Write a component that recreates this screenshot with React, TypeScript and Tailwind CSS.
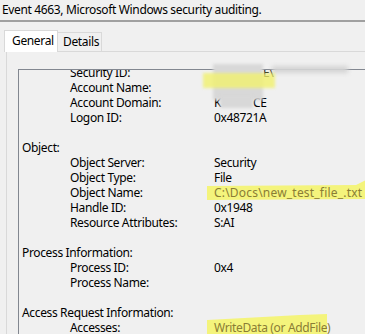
import React from "react";

type Row = { kind: "h" | "l" | "b"; label?: string; value?: React.ReactNode; hl?: boolean; wide?: boolean };

const rows: Row[] = [
  { kind: "l", label: "Security ID:", value: <span className="pl-[49px]">E\</span> },
  { kind: "l", label: "Account Name:", value: "" },
  {
    kind: "l",
    label: "Account Domain:",
    value: (
      <span className="flex">
        <span>K</span>
        <span className="inline-block w-[32px]" />
        <span>CE</span>
      </span>
    ),
  },
  { kind: "l", label: "Logon ID:", value: "0x48721A" },
  { kind: "b" },
  { kind: "h", label: "Object:" },
  { kind: "l", label: "Object Server:", value: "Security" },
  { kind: "l", label: "Object Type:", value: "File" },
  { kind: "l", label: "Object Name:", value: "C:\\Docs\\new_test_file_.txt", hl: true, wide: true },
  { kind: "l", label: "Handle ID:", value: "0x1948" },
  { kind: "l", label: "Resource Attributes:", value: "S:AI" },
  { kind: "b" },
  { kind: "h", label: "Process Information:" },
  { kind: "l", label: "Process ID:", value: "0x4" },
  { kind: "l", label: "Process Name:", value: "" },
  { kind: "b" },
  { kind: "h", label: "Access Request Information:" },
  { kind: "l", label: "Accesses:", value: "WriteData (or AddFile)", hl: true },
];

export default function App() {
  return (
    <div
      className="relative z-0 w-[365px] h-[334px] overflow-hidden bg-[#f0f0f0] text-[12px] tracking-[-0.35px] text-black"
      style={{ fontFamily: '"Noto Sans", "Open Sans", sans-serif' }}
    >
      {/* highlighter strokes (under text) */}
      <svg className="absolute left-0 top-0 -z-10" width="365" height="334">
        <polygon points="207,186 356,185 366,180 366,199 207,200" fill="#f4f47c" />
        <polygon points="207,320 300,315 327,314 327,334 207,334" fill="#f4f47c" />
      </svg>

      {/* title */}
      <div className="h-[20px] pl-[2px] leading-[20px] whitespace-nowrap">
        Event 4663, Microsoft Windows security auditing.
      </div>
      <div className="h-[2px] bg-[#a0a0a0]" />

      {/* tabs */}
      <div className="pl-[4px] pt-[7px] w-[420px]">
        <div className="flex items-end h-[22px]">
          <div className="relative z-10 h-[22px] w-[54px] bg-white border border-b-0 border-[#d9d9d9] pl-[7px] leading-[20px] mb-[-1px]">
            General
          </div>
          <div className="h-[19px] w-[44px] border border-l-0 border-b-0 border-[#d9d9d9] pl-[5px] leading-[18px]">
            Details
          </div>
        </div>
        <div className="ml-[2px] border border-[#d9d9d9] h-[300px] pl-[11px] pt-[17px]">
          <div className="border-t border-l border-[#828790] h-[280px] overflow-hidden pl-[3px]">
            <div className="mt-[-5px]">
              {rows.map((r, i) => {
                if (r.kind === "b") return <div key={i} className="h-[15px]" />;
                if (r.kind === "h")
                  return (
                    <div key={i} className="h-[15px] leading-[15px] whitespace-nowrap">
                      {r.label}
                    </div>
                  );
                return (
                  <div key={i} className="flex h-[15px] leading-[15px] whitespace-nowrap">
                    <span className="w-[192px] shrink-0 pl-[48px]">{r.label}</span>
                    <span
                      className={
                        (r.hl ? "text-[#8a7d35] " : "") + (r.wide ? "tracking-[0.2px]" : "")
                      }
                    >
                      {r.value}
                    </span>
                  </div>
                );
              })}
            </div>
          </div>
        </div>
      </div>

      {/* redactions */}
      <div className="absolute left-[213px] top-[64px] w-[50px] h-[36px] bg-[#d8d8d8] blur-[1.5px]" />
      <div className="absolute left-[220px] top-[96px] w-[33px] h-[12px] bg-[#d8d8d8] blur-[1.5px]" />
      <div className="absolute left-[272px] top-[66px] w-[76px] h-[7px] bg-[#d4d4d4] blur-[2px]" />
      <div className="absolute left-[203px] top-[73px] w-[72px] h-[15px] bg-[#f2f26e] opacity-80 blur-[1.5px]" />
    </div>
  );
}
